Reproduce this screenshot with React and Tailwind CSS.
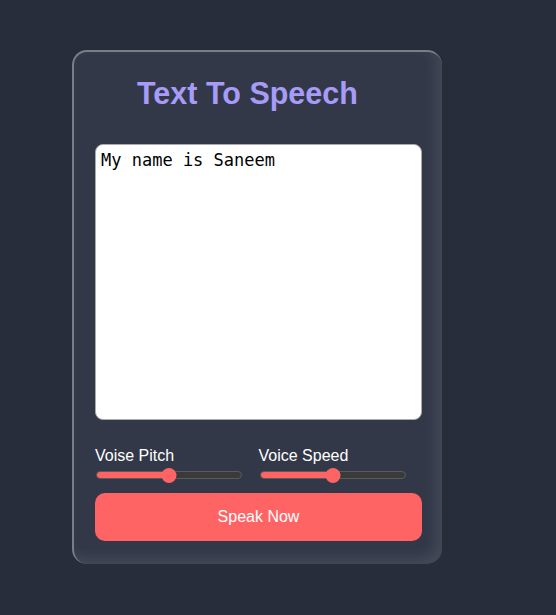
import React from "react";

function Slider({ pct }) {
  return (
    <div className="relative w-[146px] h-[14px] flex items-center">
      <div className="w-full h-[8px] rounded-full bg-[#3a3a3a] border border-[#5a5a5a] overflow-hidden">
        <div className="h-full bg-[#ff6464]" style={{ width: `${pct}%` }} />
      </div>
      <div
        className="absolute top-0 w-[15px] h-[15px] rounded-full bg-[#ff6464] -translate-x-1/2"
        style={{ left: `${pct}%` }}
      />
    </div>
  );
}

export default function App() {
  return (
    <div className="w-[556px] h-[615px] bg-[#282d3c] pt-[50px] pl-[72px] font-['Liberation_Sans',Arial,sans-serif]">
      <div className="w-[370px] h-[514px] rounded-[15px] bg-[#323848] border-t-2 border-l-2 border-[#7a7e88] shadow-[inset_-6px_-6px_14px_rgba(255,255,255,0.09)] pl-[21px] pt-[23px]">
        <h1 className="text-[30.5px] leading-[36px] font-bold text-[#a79bf8] pl-[42px]">Text To Speech</h1>
        <textarea
          defaultValue="My name is Saneem"
          className="mt-[33px] block w-[327px] h-[276px] rounded-[8px] bg-white border border-[#aaaaaa] px-[5px] py-[5px] text-[17px] leading-[21px] text-black resize-none font-['DejaVu_Sans_Mono',monospace] outline-none"
        />
        <div className="mt-[27px] flex w-[327px]">
          <div className="w-1/2 flex flex-col gap-[3px]">
            <span className="text-white text-[16px] leading-[18px]">Voise Pitch</span>
            <div className="pl-px"><Slider pct={50} /></div>
          </div>
          <div className="w-1/2 flex flex-col gap-[3px]">
            <span className="text-white text-[16px] leading-[18px]">Voice Speed</span>
            <div className="pl-px"><Slider pct={50} /></div>
          </div>
        </div>
        <button className="mt-[11px] w-[327px] h-[48px] rounded-[10px] bg-[#ff6464] text-white text-[16px]">
          Speak Now
        </button>
      </div>
    </div>
  );
}
